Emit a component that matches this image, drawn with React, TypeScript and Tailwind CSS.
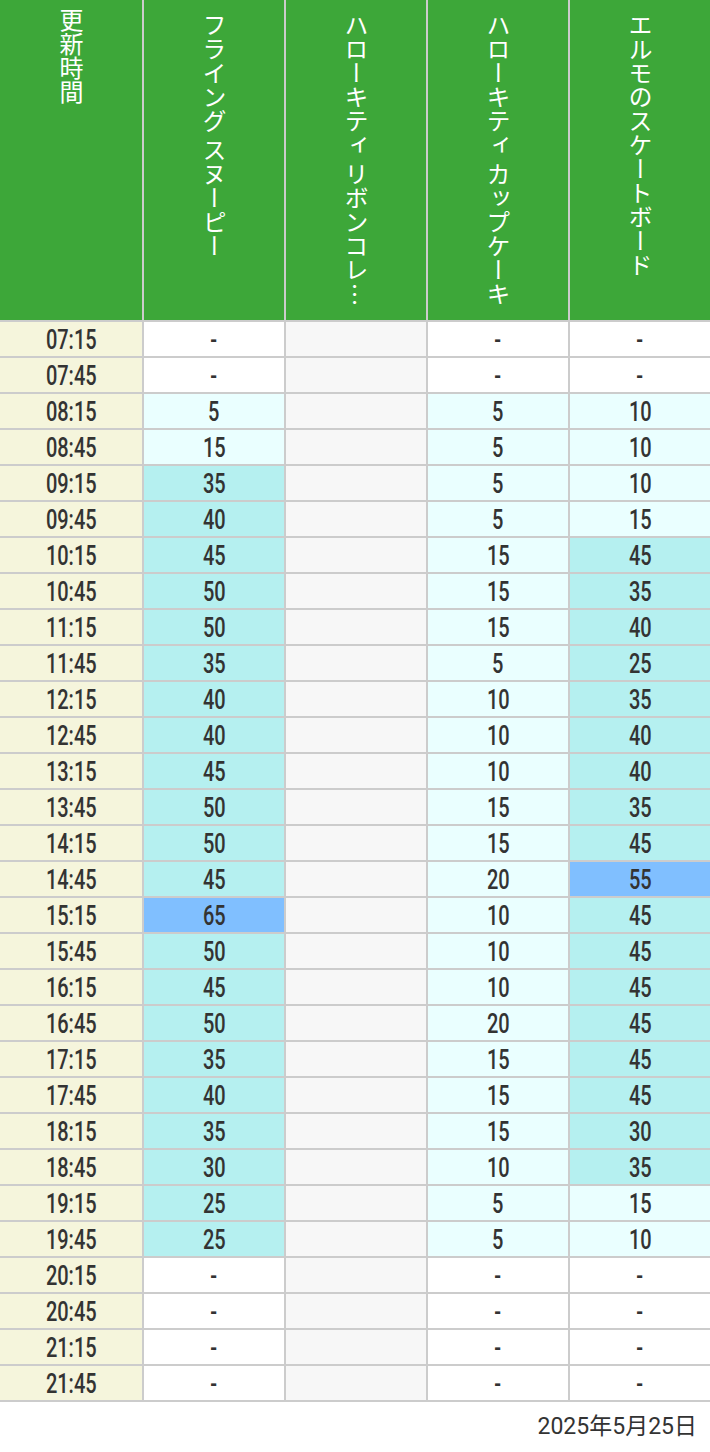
import React from "react";

type V = number | null;

const times = [
  "07:15","07:45","08:15","08:45","09:15","09:45","10:15","10:45","11:15","11:45",
  "12:15","12:45","13:15","13:45","14:15","14:45","15:15","15:45","16:15","16:45",
  "17:15","17:45","18:15","18:45","19:15","19:45","20:15","20:45","21:15","21:45",
];
const N = null;
const snoopy: V[] = [N,N,5,15,35,40,45,50,50,35,40,40,45,50,50,45,65,50,45,50,35,40,35,30,25,25,N,N,N,N];
const cup: V[] = [N,N,5,5,5,5,15,15,15,5,10,10,10,15,15,20,10,10,10,20,15,15,15,10,5,5,N,N,N,N];
const elmo: V[] = [N,N,10,10,10,15,45,35,40,25,35,40,40,35,45,55,45,45,45,45,45,45,30,35,15,10,N,N,N,N];

const numFont = { fontFamily: "Roboto, 'Noto Sans CJK JP', sans-serif" };
const jpFont = { fontFamily: "'Noto Sans CJK JP', 'Noto Sans', sans-serif" };

function bg(v: V) {
  if (v === null) return "bg-white";
  if (v <= 20) return "bg-[#eaffff]";
  if (v >= 55) return "bg-[#80bfff]";
  return "bg-[#b5f0f0]";
}

function Num({ t }: { t: string }) {
  return (
    <span
      className="inline-block translate-y-[1px] scale-x-[0.74] text-[27px] font-medium leading-none text-[#333333]"
      style={numFont}
    >
      {t}
    </span>
  );
}

function Cell({ v, last }: { v: V; last?: boolean }) {
  return (
    <div
      className={`flex h-[34px] items-center justify-center ${bg(v)} ${last ? "" : "border-r-2 border-[#cccccc]"}`}
    >
      <Num t={v === null ? "-" : String(v)} />
    </div>
  );
}

function Head({ text, last, first }: { text: string; last?: boolean; first?: boolean }) {
  return (
    <div
      className={`flex h-[320px] justify-center overflow-hidden bg-[#3da739] ${first ? "pt-[8px]" : "pt-[13px]"} ${last ? "" : "border-r-2 border-[#cccccc]"}`}
    >
      <div
        className="whitespace-nowrap text-[24px] leading-[24px] text-white"
        style={{ ...jpFont, writingMode: "vertical-rl" }}
      >
        {text}
      </div>
    </div>
  );
}

const cols = "grid grid-cols-[144px_142px_142px_142px_140px] border-b-2 border-[#cccccc]";

export default function App() {
  return (
    <div className="w-[710px] bg-white">
      <div className={cols}>
        <Head text="更新時間" first />
        <Head text="フライング スヌーピー" />
        <Head text="ハローキティ リボンコレ…" />
        <Head text="ハローキティ カップケーキ" />
        <Head text="エルモのスケートボード" last />
      </div>
      {times.map((t, i) => (
        <div key={t} className={cols}>
          <div className="flex h-[34px] items-center justify-center border-r-2 border-[#cccccc] bg-[#f5f5dc]">
            <Num t={t} />
          </div>
          <Cell v={snoopy[i]} />
          <div className="h-[34px] border-r-2 border-[#cccccc] bg-[#f7f7f7]" />
          <Cell v={cup[i]} />
          <Cell v={elmo[i]} last />
        </div>
      ))}
      <div className="flex h-[50px] items-center justify-end pr-[13px]">
        <span className="text-[23px] text-[#333333]" style={numFont}>
          2025年5月25日
        </span>
      </div>
    </div>
  );
}
